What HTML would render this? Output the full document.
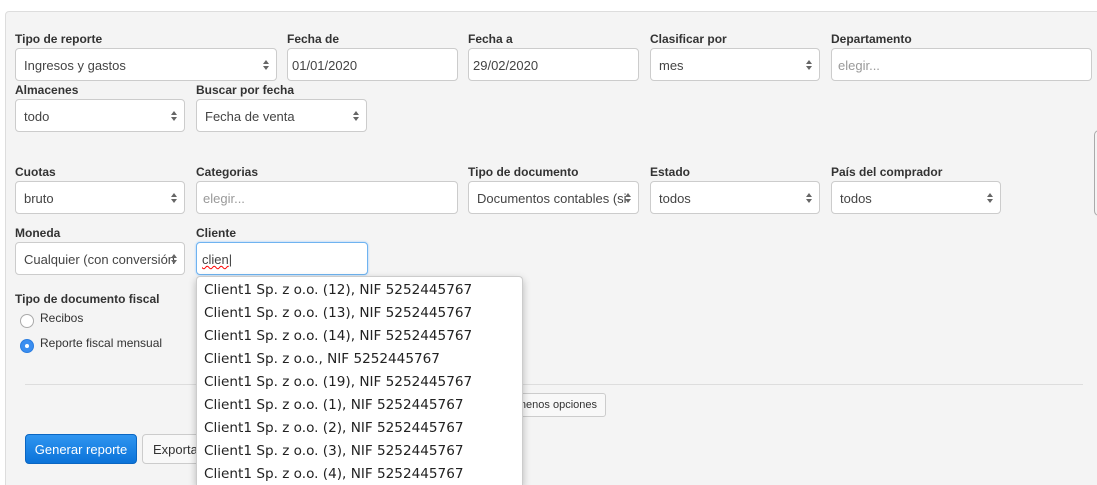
<!DOCTYPE html>
<html><head><meta charset="utf-8"><style>
*{box-sizing:border-box}
html,body{margin:0;width:1097px;height:485px;overflow:hidden}
body{background:#fff;font-family:"Liberation Sans",Arial,sans-serif;position:relative}
.panel{position:absolute;left:5px;top:11px;width:1100px;height:480px;background:#f4f4f4;border:1px solid #ddd;border-radius:4px}
.l{position:absolute;font-size:12px;font-weight:bold;color:#333}
.f{position:absolute;height:33px;background:#fff;border:1px solid #ccc;border-radius:4px;font-size:13px;color:#444;padding:0 8px;line-height:34px;white-space:nowrap;overflow:hidden}
.f.p{color:#999;padding-left:6px}
.s{padding-right:18px}
.s::after{content:"";position:absolute;right:7px;top:11px;border-left:3px solid transparent;border-right:3px solid transparent;border-bottom:4px solid #666}
.s::before{content:"";position:absolute;right:7px;top:17px;border-left:3px solid transparent;border-right:3px solid transparent;border-top:4px solid #666}
.r{position:absolute;width:14px;height:14px;border-radius:50%;border:1px solid #aaa;background:#fff}
.t{position:absolute;font-size:12px;color:#333}
.dd{position:absolute;left:196px;top:276px;width:327px;height:209px;background:#fff;border:1px solid #ccc;border-bottom:none;border-radius:4px 4px 0 0;box-shadow:0 3px 8px rgba(0,0,0,.25);padding-top:2px;overflow:hidden}
.dd div{height:23px;line-height:23px;padding-left:7px;font-family:"DejaVu Sans",sans-serif;font-size:13.6px;color:#222;white-space:nowrap}
</style></head><body>
<div class="panel"></div>
<div class="l" style="left:15px;top:32px">Tipo de reporte</div>
<div class="l" style="left:287px;top:32px">Fecha de</div>
<div class="l" style="left:468px;top:32px">Fecha a</div>
<div class="l" style="left:650px;top:32px">Clasificar por</div>
<div class="l" style="left:831px;top:32px">Departamento</div>
<div class="f s" style="left:15px;top:48px;width:262px">Ingresos y gastos</div>
<div class="f" style="left:287px;top:48px;width:171px;padding-left:4px">01/01/2020</div>
<div class="f" style="left:468px;top:48px;width:171px;padding-left:4px">29/02/2020</div>
<div class="f s" style="left:650px;top:48px;width:170px">mes</div>
<div class="f p" style="left:831px;top:48px;width:261px">elegir...</div>
<div class="l" style="left:15px;top:83px">Almacenes</div>
<div class="l" style="left:196px;top:83px">Buscar por fecha</div>
<div class="f s" style="left:15px;top:99px;width:170px">todo</div>
<div class="f s" style="left:196px;top:99px;width:171px">Fecha de venta</div>
<div class="l" style="left:15px;top:165px">Cuotas</div>
<div class="l" style="left:196px;top:165px">Categorias</div>
<div class="l" style="left:468px;top:165px">Tipo de documento</div>
<div class="l" style="left:650px;top:165px">Estado</div>
<div class="l" style="left:831px;top:165px">País del comprador</div>
<div class="f s" style="left:15px;top:181px;width:170px">bruto</div>
<div class="f p" style="left:196px;top:181px;width:262px">elegir...</div>
<div class="f s" style="left:468px;top:181px;width:171px">Documentos contables (si</div>
<div class="f s" style="left:650px;top:181px;width:170px">todos</div>
<div class="f s" style="left:831px;top:181px;width:170px">todos</div>
<div style="position:absolute;left:1094px;top:130px;width:10px;height:86px;border:1px solid #aaa;border-radius:5px"></div>
<div class="l" style="left:15px;top:226px">Moneda</div>
<div class="l" style="left:196px;top:226px">Cliente</div>
<div class="f s" style="left:15px;top:242px;width:170px">Cualquier (con conversión</div>
<div class="f" style="left:196px;top:242px;width:172px;border-color:#6fb3f0;box-shadow:0 0 2px #9cf;padding-left:5px"><span style="text-decoration:underline wavy red;text-decoration-thickness:1px">clien</span>|</div>
<div class="l" style="left:15px;top:292px">Tipo de documento fiscal</div>
<div class="r" style="left:20px;top:314px"></div>
<div class="t" style="left:40px;top:311px">Recibos</div>
<div class="r" style="left:20px;top:339px;background:#3b8ef0;border-color:#2a7de0"><div style="width:4px;height:4px;background:#fff;border-radius:50%;margin:4px"></div></div>
<div class="t" style="left:40px;top:336px">Reporte fiscal mensual</div>
<div style="position:absolute;left:25px;top:384px;width:1058px;height:1px;background:#ddd"></div>
<div style="position:absolute;left:440px;top:393px;width:166px;height:24px;background:#f8f8f8;border:1px solid #ccc;border-radius:3px;font-size:11px;color:#333;line-height:22px;text-align:right;padding-right:8px">menos opciones</div>
<div style="position:absolute;left:25px;top:434px;width:112px;height:30px;background:linear-gradient(#2f95f0,#0b73d9);border:1px solid #0a66c2;border-radius:4px;color:#fff;font-size:13px;line-height:30px;text-align:center">Generar reporte</div>
<div style="position:absolute;left:142px;top:434px;width:90px;height:30px;background:#f8f8f8;border:1px solid #ccc;border-radius:4px;color:#333;font-size:13px;line-height:30px;padding-left:10px">Exportar</div>
<div class="dd">
<div>Client1 Sp. z o.o. (12), NIF 5252445767</div>
<div>Client1 Sp. z o.o. (13), NIF 5252445767</div>
<div>Client1 Sp. z o.o. (14), NIF 5252445767</div>
<div>Client1 Sp. z o.o., NIF 5252445767</div>
<div>Client1 Sp. z o.o. (19), NIF 5252445767</div>
<div>Client1 Sp. z o.o. (1), NIF 5252445767</div>
<div>Client1 Sp. z o.o. (2), NIF 5252445767</div>
<div>Client1 Sp. z o.o. (3), NIF 5252445767</div>
<div>Client1 Sp. z o.o. (4), NIF 5252445767</div>
</div>
</body></html>
